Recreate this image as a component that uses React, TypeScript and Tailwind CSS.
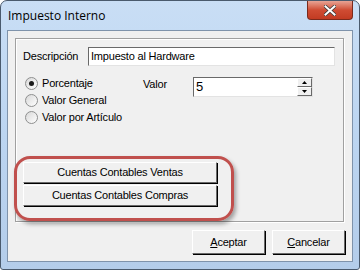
import React from "react";

const ui = { fontFamily: '"Liberation Sans", Arial, sans-serif' };

function Radio({ checked, label }: { checked?: boolean; label: string }) {
  return (
    <div className="flex items-center h-[16px]">
      <div className="w-[13px] h-[13px] rounded-full border border-[#8e8f8f] bg-gradient-to-br from-[#d8d8d8] to-white flex items-center justify-center">
        {checked && <div className="w-[5px] h-[5px] rounded-full bg-[#1a1a1a]" />}
      </div>
      <span className="ml-[4px] text-[11px] tracking-[-0.2px] text-black leading-none">{label}</span>
    </div>
  );
}

function Btn({ children, className = "" }: { children: React.ReactNode; className?: string }) {
  return (
    <div
      className={
        "flex items-center justify-center bg-[#f0f0f0] border border-t-white border-l-white border-r-[#696969] border-b-[#696969] shadow-[1px_1px_0_#000] text-[11px] tracking-[-0.2px] text-black " +
        className
      }
    >
      {children}
    </div>
  );
}

export default function App() {
  return (
    <div className="w-[360px] h-[270px] bg-white" style={ui}>
      <div className="relative w-[360px] h-[270px] rounded-t-[7px] rounded-b-[3px] border border-[#4a5a6d] bg-gradient-to-b from-[#c9def5] via-[#bcd5f1] to-[#b4cdea] flex flex-col overflow-hidden">
        {/* title bar */}
        <div className="h-[29px] flex items-start justify-between">
          <div className="pl-[7px] pt-[6px] text-[12px] text-black" style={{ fontFamily: '"Open Sans", "Liberation Sans", sans-serif' }}>
            Impuesto Interno
          </div>
          <div className="mr-[6px] w-[46px] h-[19px] rounded-b-[4px] border border-t-0 border-[#7a2a1c] bg-gradient-to-b from-[#e7a394] via-[#cf4c33] to-[#c23b22] flex items-center justify-center">
            <svg width="12" height="11" viewBox="0 0 12 11">
              <path d="M1.5 1.5 L10.5 9.5 M10.5 1.5 L1.5 9.5" stroke="#3a3a3a" strokeWidth="3.6" strokeLinecap="square" />
              <path d="M1.5 1.5 L10.5 9.5 M10.5 1.5 L1.5 9.5" stroke="#ffffff" strokeWidth="2" strokeLinecap="square" />
            </svg>
          </div>
        </div>
        {/* client */}
        <div className="mx-[6px] mb-[7px] flex-1 border border-[#7f93ab] bg-[#f0f0f0] flex flex-col">
          {/* group box */}
          <div className="mt-[7px] ml-[7px] w-[329px] h-[184px] border border-[#a0a0a0] shadow-[inset_1px_1px_0_#fff,1px_1px_0_#fff] flex flex-col">
            <div className="mt-[8px] flex items-center">
              <span className="ml-[7px] w-[65px] text-[11px] tracking-[-0.2px] text-black">Descripción</span>
              <div className="w-[247px] h-[19px] border border-t-[#696969] border-l-[#696969] border-b-[#e3e3e3] border-r-[#e3e3e3] bg-white flex items-center">
                <span className="pl-[2px] text-[11px] tracking-[-0.2px] text-black">Impuesto al Hardware</span>
              </div>
            </div>
            <div className="mt-[11px] flex">
              <div className="ml-[9px] flex flex-col gap-[1px] w-[118px] -mt-[2px]">
                <Radio checked label="Porcentaje" />
                <Radio label="Valor General" />
                <Radio label="Valor por Artículo" />
              </div>
              <span className="text-[11px] tracking-[-0.2px] text-black -mt-[1px]">Valor</span>
              <div className="ml-[26px] w-[120px] h-[20px] border border-t-[#696969] border-l-[#696969] border-b-[#e3e3e3] border-r-[#e3e3e3] bg-white flex">
                <span className="flex-1 pl-[2px] text-[13px] leading-[18px] text-black">5</span>
                <div className="w-[15px] flex flex-col">
                  <div className="h-[9px] bg-[#f0f0f0] border border-t-white border-l-white border-r-[#696969] border-b-[#696969] flex items-center justify-center">
                    <svg width="5" height="3"><path d="M2.5 0 L5 3 L0 3Z" fill="#000" /></svg>
                  </div>
                  <div className="h-[9px] bg-[#f0f0f0] border border-t-white border-l-white border-r-[#696969] border-b-[#696969] flex items-center justify-center">
                    <svg width="5" height="3"><path d="M0 0 L5 0 L2.5 3Z" fill="#000" /></svg>
                  </div>
                </div>
              </div>
            </div>
            <div className="mt-[37px] ml-[7px] flex flex-col gap-[2px]">
              <Btn className="w-[194px] h-[21px]">Cuentas Contables Ventas</Btn>
              <Btn className="w-[194px] h-[21px]">Cuentas Contables Compras</Btn>
            </div>
          </div>
          {/* bottom buttons */}
          <div className="mt-[8px] ml-[184px] flex gap-[7px]">
            <Btn className="w-[73px] h-[24px]"><span><span className="underline">A</span>ceptar</span></Btn>
            <Btn className="w-[73px] h-[24px]"><span><span className="underline">C</span>ancelar</span></Btn>
          </div>
        </div>
        {/* annotation highlight */}
        <div className="absolute left-[13px] top-[155px] w-[220px] h-[65px] rounded-[16px] border-[3px] border-[#c0504d] shadow-[2px_3px_4px_rgba(0,0,0,0.35)]" />
      </div>
    </div>
  );
}
